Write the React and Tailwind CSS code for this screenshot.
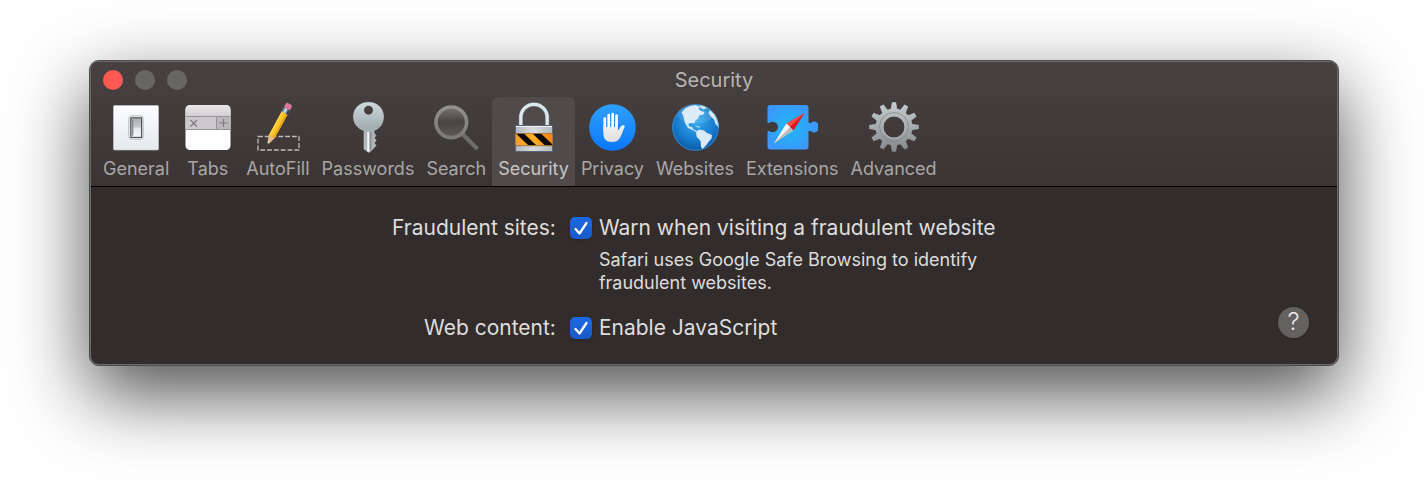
import React, { useState } from 'react';
import clsx from 'clsx';

const GeneralIcon = () => (
    <svg width="52" height="52" viewBox="0 0 52 52" aria-hidden="true">
        <defs>
            <linearGradient id="plate" x1="0" y1="0" x2="0" y2="1">
                <stop offset="0" stopColor="#fcfdff" />
                <stop offset="1" stopColor="#e6e9ee" />
            </linearGradient>
            <linearGradient id="switch" x1="0" y1="0" x2="0" y2="1">
                <stop offset="0" stopColor="#a9aaac" />
                <stop offset="0.45" stopColor="#c6c7c9" />
                <stop offset="0.55" stopColor="#e8e9eb" />
                <stop offset="1" stopColor="#f6f7f8" />
            </linearGradient>
        </defs>
        <rect x="3.5" y="4.5" width="45" height="44.5" rx="1" fill="url(#plate)" stroke="#c9ccd0" strokeWidth="0.6" />
        <rect x="18.8" y="14.8" width="14.4" height="23.4" rx="2.5" fill="#f0f1f3" stroke="#b9babd" />
        <rect x="20.8" y="16.8" width="10.8" height="19.6" fill="url(#switch)" stroke="#4b4d50" strokeWidth="1.1" />
        <path d="M21.4 17.4l2 2v14.5l-2 2z" fill="#8e9093" />
    </svg>
);

const TabsIcon = () => (
    <svg width="52" height="52" viewBox="0 0 52 52" aria-hidden="true">
        <defs>
            <linearGradient id="tabsTop" x1="0" y1="0" x2="0" y2="1">
                <stop offset="0" stopColor="#e9e7e9" />
                <stop offset="1" stopColor="#cfcdcf" />
            </linearGradient>
        </defs>
        <rect x="3.5" y="4" width="45" height="45" rx="4.5" fill="#fff" />
        <path d="M3.5 16V8.5A4.5 4.5 0 0 1 8 4h36a4.5 4.5 0 0 1 4.5 4.5V16z" fill="url(#tabsTop)" />
        <rect x="3.5" y="15.5" width="31" height="13.5" fill="#cbc9cb" />
        <rect x="34.5" y="15.5" width="14" height="13.5" fill="#b9b7b9" />
        <path d="M3.5 15.5h45M3.5 28.5h45M34.5 15.5V29" stroke="#959395" />
        <path d="M8.5 19l6.500 6.500M15 19l-6.500 6.500M41.500 18v8M37.500 22h8" stroke="#7d7b7d" strokeWidth="1.2" />
    </svg>
);

const AutoFillIcon = () => (
    <svg width="52" height="52" viewBox="0 0 52 52" aria-hidden="true">
        <rect x="6" y="35.5" width="41" height="13.5" fill="none" stroke="#bdbab8" strokeWidth="1.3" strokeDasharray="4.8 2" />
        <g transform="translate(14.7 45) rotate(28.5)">
            <path d="M0 0L-3.3 -10.5H3.3z" fill="#e3bd94" />
            <path d="M0 0L-1 -3H1z" fill="#34302e" />
            <path d="M-3.3 -10L-3.3 -38H3.3V-10L1.6 -11.2L0 -9.8L-1.6 -11.2z" fill="#fdc427" />
            <path d="M-3.3 -10V-38H-1.3V-10.9z" fill="#ffd045" />
            <path d="M1.5 -11V-38H3.3V-10z" fill="#e8a314" />
            <rect x="-3.4" y="-42.5" width="6.8" height="5" fill="#6b87a0" />
            <rect x="-1.6" y="-42.5" width="2" height="5" fill="#d3e1ea" />
            <rect x="1.8" y="-42.5" width="1.6" height="5" fill="#314254" />
            <path d="M-3.4 -42.5v-3.5a2 2 0 0 1 2 -2h2.8a2 2 0 0 1 2 2v3.5z" fill="#e2749c" />
        </g>
    </svg>
);

const PasswordsIcon = () => (
    <svg width="52" height="52" viewBox="0 0 52 52" aria-hidden="true">
        <defs>
            <linearGradient id="keyMetal" x1="0" y1="0" x2="0" y2="1">
                <stop offset="0" stopColor="#ced9dd" />
                <stop offset="0.5" stopColor="#a3aeb2" />
                <stop offset="1" stopColor="#b3b8bb" />
            </linearGradient>
        </defs>
        <path
            fillRule="evenodd"
            fill="url(#keyMetal)"
            stroke="#d4dcdf"
            strokeWidth="0.5"
            d="M26.5 1.2C35 1.2 41.5 7 41.5 15.5C41.5 22.5 38 27.5 32 29.5V32L34 34.500L32.200 37L34.200 39.500L32.200 42L34 44.500L31 48L27 51.500L22 48V29.500C15.500 27.500 11.500 22.500 11.500 15.500C11.500 7 18 1.200 26.500 1.200zM26.500 4.500a4.700 4.700 0 1 0 0.010 0z"
        />
        <path d="M26.3 31V50.5" stroke="#f5f6f7" strokeWidth="2.2" />
        <path d="M28.5 31V49" stroke="#85898d" strokeWidth="1.5" />
    </svg>
);

const SearchIcon = () => (
    <svg width="52" height="52" viewBox="0 0 52 52" aria-hidden="true">
        <defs>
            <linearGradient id="lens" x1="0" y1="0" x2="0" y2="1">
                <stop offset="0" stopColor="#777573" />
                <stop offset="0.5" stopColor="#464443" />
                <stop offset="1" stopColor="#5f5d5b" />
            </linearGradient>
            <linearGradient id="lensRim" x1="0" y1="0" x2="0" y2="1">
                <stop offset="0" stopColor="#91908f" />
                <stop offset="1" stopColor="#7b7978" />
            </linearGradient>
        </defs>
        <path d="M33 33.500L46 46.500" stroke="#6f6d6c" strokeWidth="4.2" strokeLinecap="square" />
        <circle cx="21.3" cy="21.3" r="15.3" fill="url(#lens)" stroke="url(#lensRim)" strokeWidth="3.6" />
    </svg>
);

const SecurityIcon = () => (
    <svg width="52" height="52" viewBox="0 0 52 52" aria-hidden="true">
        <defs>
            <linearGradient id="lockBody" x1="0" y1="0" x2="1" y2="0">
                <stop offset="0" stopColor="#b3b8bc" />
                <stop offset="0.5" stopColor="#d9dbdd" />
                <stop offset="1" stopColor="#b3b8bc" />
            </linearGradient>
            <linearGradient id="lockBand" x1="0" y1="0" x2="1" y2="0">
                <stop offset="0" stopColor="#f59a2c" />
                <stop offset="0.5" stopColor="#ffaf25" />
                <stop offset="1" stopColor="#f7830f" />
            </linearGradient>
            <clipPath id="band">
                <rect x="7.5" y="32.5" width="37" height="12" />
            </clipPath>
        </defs>
        <path d="M12.8 24V16.5a13.2 13.2 0 0 1 26.400 0V24" fill="none" stroke="#6d7780" strokeWidth="4.2" />
        <path d="M12.8 24V16.5a13.2 13.2 0 0 1 26.400 0V24" fill="none" stroke="#dce8ed" strokeWidth="3.200" />
        <rect x="7.5" y="24.5" width="37" height="26" rx="0.8" fill="url(#lockBody)" stroke="#56657c" />
        <path d="M8 25.5h36" stroke="#edf1f3" />
        <rect x="7.5" y="32.5" width="37" height="12" fill="url(#lockBand)" />
        <g clipPath="url(#band)" fill="#0c0a08">
            <path d="M8 32.500H16L28.500 44.500H20.500z" />
            <path d="M24.500 32.500H33L45.500 44.500H37z" />
        </g>
        <path d="M7.5 32.5h37M7.5 44.7h37" stroke="#8a5522" strokeWidth="0.6" />
    </svg>
);

const PrivacyIcon = () => (
    <svg width="52" height="52" viewBox="0 0 52 52" aria-hidden="true">
        <defs>
            <linearGradient id="privacyBlue" x1="0" y1="0" x2="0" y2="1">
                <stop offset="0" stopColor="#2ea0fb" />
                <stop offset="1" stopColor="#0b77fe" />
            </linearGradient>
            <linearGradient id="handFill" gradientUnits="userSpaceOnUse" x1="0" y1="11" x2="0" y2="41">
                <stop offset="0" stopColor="#fff" />
                <stop offset="1" stopColor="#dedede" />
            </linearGradient>
        </defs>
        <circle cx="26.5" cy="26.5" r="23.3" fill="url(#privacyBlue)" />
        <g stroke="#fff" strokeWidth="2.7" strokeLinecap="round">
            <path d="M18.8 17.5V30" />
            <path d="M22.7 14L22.8 30" />
            <path d="M26.700 13L26.600 30" />
            <path d="M30.600 14.500L30.400 30" />
        </g>
        <path
            fill="url(#handFill)"
            d="M17.4 26H31.7V29.5C33.800 28.500 34.200 25.500 36 24.500C37.300 23.900 39.200 24.400 38.700 25.800C36.800 29 36 34.500 33.200 38C31.200 40.400 28.500 41 25.500 41C20.500 41 17.400 38 17.400 33z"
        />
    </svg>
);

const WebsitesIcon = () => (
    <svg width="52" height="52" viewBox="0 0 52 52" aria-hidden="true">
        <defs>
            <radialGradient id="ocean" cx="0.5" cy="0.35" r="0.65">
                <stop offset="0" stopColor="#35acf0" />
                <stop offset="0.6" stopColor="#1a7fd2" />
                <stop offset="1" stopColor="#0b5aa5" />
            </radialGradient>
            <clipPath id="globe">
                <circle cx="26.5" cy="26.5" r="23.3" />
            </clipPath>
        </defs>
        <circle cx="26.5" cy="26.5" r="23.3" fill="url(#ocean)" />
        <g clipPath="url(#globe)" fill="#d9e9f5">
            <path d="M12.500 11.500L16 7.500L21 5L26 4L31 5.500L29.500 8L32 10L35.500 11L34 14L30.500 14L29.500 17L26.500 19.500L25 22.500L22.500 22L19.500 22.500L20 25.500L23 26L24.500 28.500L28 30L27 31L23.500 29L19 27L16 22L15 17.500L14 14z" />
            <path d="M30.500 3.500L36 5L38 7L34.500 8.500L31.500 6.500z" />
            <path d="M27 30.500L30.500 28.500L35 29.500L38 32L43 34L42.500 37.500L39.500 41L37 44.500L33.500 48L32 46L31.500 40L27.500 35.500z" />
            <path d="M41 9L46 13L50 21V27L46.500 23L45 18.500L41.500 15L39.500 12z" />
            <path d="M26 24.500L30 25.500L31.500 26.800L28.500 26.300z" />
        </g>
        <ellipse cx="26.5" cy="13" rx="18" ry="9.5" fill="#fff" opacity="0.12" />
        <circle cx="26.5" cy="26.5" r="22.8" fill="none" stroke="#49a2df" opacity="0.6" />
    </svg>
);

const ExtensionsIcon = () => (
    <svg width="52" height="52" viewBox="0 0 52 52" aria-hidden="true">
        <defs>
            <radialGradient id="puzzle" gradientUnits="userSpaceOnUse" cx="23" cy="26" r="25">
                <stop offset="0" stopColor="#1cbcf0" />
                <stop offset="1" stopColor="#3b97fb" />
            </radialGradient>
        </defs>
        <path
            fill="url(#puzzle)"
            d="M4.500 4H39.500A3 3 0 0 1 42.500 7V20.500C42.500 22.500 44 22.800 45 21.700A5.300 5.300 0 1 1 45 30.300C44 29.200 42.500 29.500 42.500 31.500V45.500A3 3 0 0 1 39.500 48.500H4.500A3 3 0 0 1 1.500 45.500V31.500C1.500 29.800 2.800 29.500 4 30.600A5.300 5.300 0 1 0 4 21.400C2.800 22.500 1.500 22.200 1.500 20.500V7A3 3 0 0 1 4.500 4z"
        />
        <path d="M38.5 12L20.5 22.5L27.500 29.500z" fill="#d9191e" />
        <path d="M38.5 12L20.5 22.5L24 26z" fill="#ff4a46" />
        <path d="M8 42.5L20.5 22.5L27.500 29.500z" fill="#b8bdc2" />
        <path d="M8 42.5L20.5 22.5L24 26z" fill="#f6f7f8" />
    </svg>
);

const toothAngles = [0, 30, 60, 90, 120, 150, 180, 210, 240, 270, 300, 330];

const AdvancedIcon = () => (
    <svg width="52" height="52" viewBox="0 0 52 52" aria-hidden="true">
        <defs>
            <linearGradient id="gear" gradientUnits="userSpaceOnUse" x1="0" y1="1" x2="0" y2="51">
                <stop offset="0" stopColor="#c3ccd1" />
                <stop offset="0.5" stopColor="#a6abae" />
                <stop offset="1" stopColor="#85878a" />
            </linearGradient>
            <mask id="teeth">
                {toothAngles.map((angle) => (
                    <path key={angle} d="M22.500 10L23.900 1.200H28.100L29.500 10z" fill="#fff" transform={`rotate(${angle} 26 26)`} />
                ))}
                <circle cx="26" cy="26" r="18.5" fill="#fff" />
                <circle cx="26" cy="26" r="10.5" fill="#000" />
            </mask>
        </defs>
        <rect width="52" height="52" fill="url(#gear)" mask="url(#teeth)" />
        <circle cx="26" cy="26" r="14.5" fill="none" stroke="#85898c" strokeWidth="0.8" />
        <circle cx="26" cy="26" r="11.2" fill="none" stroke="#b6babd" strokeWidth="0.8" />
    </svg>
);

const tabs = [
    { name: "General", Icon: GeneralIcon },
    { name: "Tabs", Icon: TabsIcon },
    { name: "AutoFill", Icon: AutoFillIcon },
    { name: "Passwords", Icon: PasswordsIcon },
    { name: "Search", Icon: SearchIcon },
    { name: "Security", Icon: SecurityIcon },
    { name: "Privacy", Icon: PrivacyIcon },
    { name: "Websites", Icon: WebsitesIcon },
    { name: "Extensions", Icon: ExtensionsIcon },
    { name: "Advanced", Icon: AdvancedIcon },
];

const Checkbox = ({ id, checked, onChange }) => (
    <span className="grid size-[22px] shrink-0">
        <input
            id={id}
            type="checkbox"
            checked={checked}
            onChange={(e) => onChange(e.target.checked)}
            className="col-start-1 row-start-1 size-full appearance-none rounded-[5px] bg-[#6b6868] checked:bg-linear-to-b checked:from-[#1b6ae6] checked:to-[#1a59c9] shadow-sm"
        />
        {checked && (
            <svg viewBox="0 0 22 22" className="pointer-events-none col-start-1 row-start-1 size-full" aria-hidden="true">
                <path d="M5.5 12L9.5 16.5L16.5 6" fill="none" stroke="#fff" strokeWidth="2.3" strokeLinecap="round" strokeLinejoin="round" />
            </svg>
        )}
    </span>
);

const App = () => {
    const [active, setActive] = useState("Security");
    const [warnFraud, setWarnFraud] = useState(true);
    const [javaScript, setJavaScript] = useState(true);

    return (
        <div className="min-h-screen bg-white px-[89px] pt-[60px] pb-[118px] font-['Inter','Liberation_Sans',sans-serif]">
            <div className="rounded-[10px] border border-[#4c4c4b] bg-[#6b6a69] p-px shadow-[0_28px_76px_rgba(0,0,0,0.7)]">
                <div className="overflow-hidden rounded-lg bg-[#322d2c]">

                    {/* Title bar and toolbar */}
                    <header className="border-b border-black bg-linear-to-b from-[#474241] to-[#3a3534]">
                        <div className="grid h-[35px] grid-cols-[1fr_auto_1fr] items-center px-3">
                            <div className="flex gap-3">
                                <button type="button" aria-label="Close" className="size-5 rounded-full bg-[#ff5a52]" />
                                <button type="button" aria-label="Minimize" className="size-5 rounded-full bg-[#696564]" />
                                <button type="button" aria-label="Zoom" className="size-5 rounded-full bg-[#696564]" />
                            </div>
                            <h1 className="text-xl text-[#b8b4b3]">Security</h1>
                        </div>

                        <nav className="flex px-1.5">
                            {tabs.map(({ name, Icon }) => (
                                <button
                                    key={name}
                                    type="button"
                                    onClick={() => setActive(name)}
                                    className={clsx(
                                        "flex min-w-[65px] flex-col items-center gap-1 rounded-t-md px-1.5 pt-1 pb-[5px] text-lg leading-6",
                                        active === name ? "bg-[#504b4a] text-[#c9c5c4]" : "text-[#aaa6a5]"
                                    )}
                                >
                                    <Icon />
                                    {name}
                                </button>
                            ))}
                        </nav>
                    </header>

                    {/* Security settings */}
                    <main className="pt-[27px] pb-[22px] text-[#dfdddc]">
                        <div className="grid grid-cols-[20fr_33fr] gap-x-[14px] gap-y-5 text-[21px] leading-7">
                            <div className="text-right">Fraudulent sites:</div>
                            <div>
                                <div className="flex items-center gap-[7px]">
                                    <Checkbox id="warnFraud" checked={warnFraud} onChange={setWarnFraud} />
                                    <label htmlFor="warnFraud">Warn when visiting a fraudulent website</label>
                                </div>
                                <p className="mt-1.5 ml-[29px] max-w-[400px] text-lg leading-[23px]">
                                    Safari uses Google Safe Browsing to identify fraudulent websites.
                                </p>
                            </div>

                            <div className="text-right">Web content:</div>
                            <div className="flex items-center justify-between pr-7">
                                <div className="flex items-center gap-[7px]">
                                    <Checkbox id="javaScript" checked={javaScript} onChange={setJavaScript} />
                                    <label htmlFor="javaScript">Enable JavaScript</label>
                                </div>
                                <button type="button" aria-label="Help" className="-mt-3 size-[31px] rounded-full bg-[#656160] text-2xl leading-none font-light text-[#ebe9e8] shadow">
                                    ?
                                </button>
                            </div>
                        </div>
                    </main>
                </div>
            </div>
        </div>
    );
};

export default App;
